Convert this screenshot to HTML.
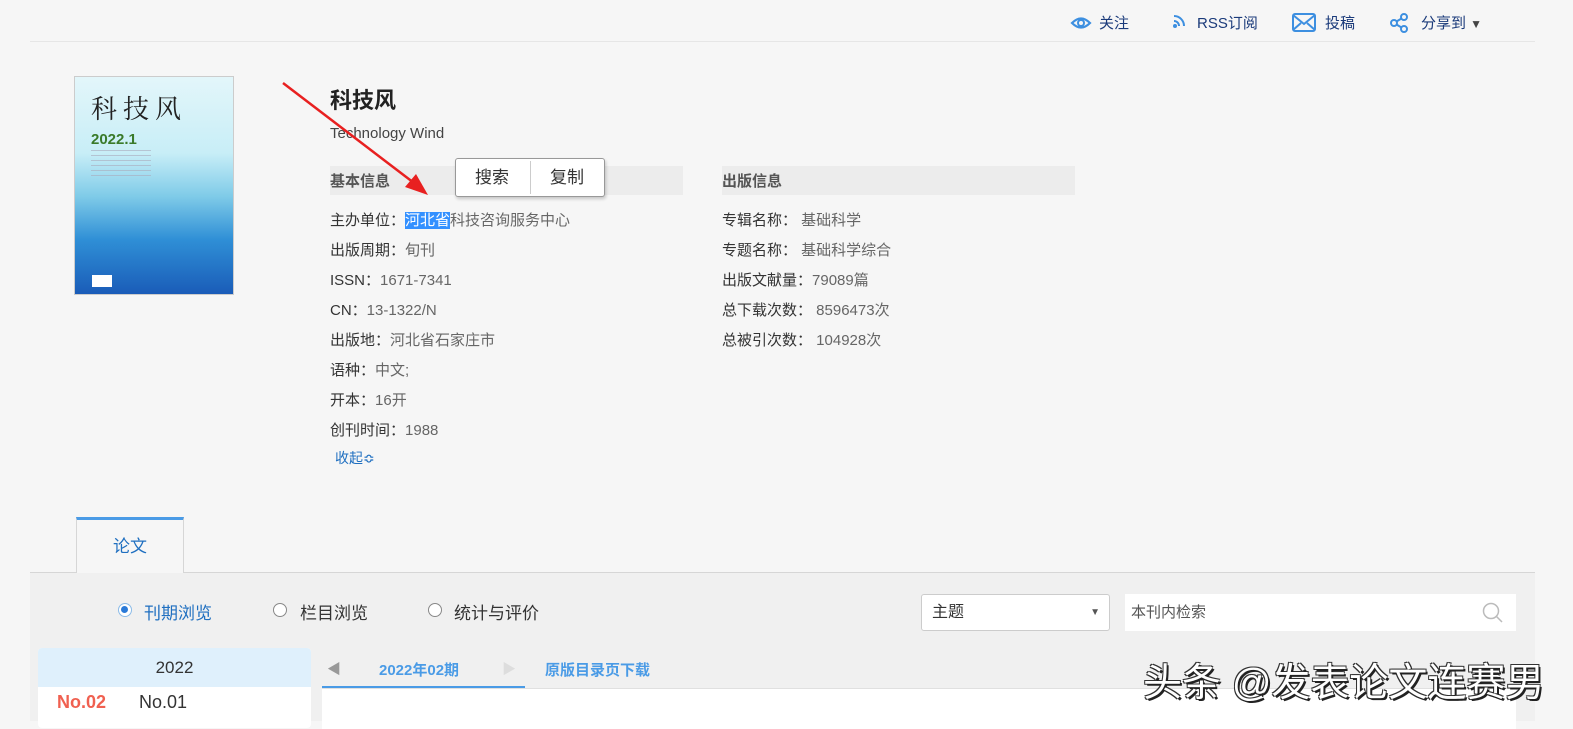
<!DOCTYPE html>
<html><head><meta charset="utf-8"><style>
body{margin:0;width:1573px;height:721px;background:#f6f6f6;font-family:"Liberation Sans","Noto Sans CJK SC",sans-serif;position:relative;overflow:hidden;color:#333}
.a{position:absolute;white-space:nowrap}
.t{font-size:15px;color:#333}
.g{color:#666}
.hdr{position:absolute;height:29px;background:#ececec;font-size:15px;font-weight:bold;color:#555;line-height:31px}
</style></head><body>
<div class="a" style="left:30px;top:41px;width:1505px;height:1px;background:#e6e6e6"></div>
<!-- top nav -->
<svg class="a" style="left:1070px;top:13px" width="22" height="20" viewBox="0 0 22 20"><path d="M2 10Q11 1 20 10Q11 19 2 10Z" fill="none" stroke="#3d8fe0" stroke-width="2.2"/><circle cx="11" cy="10" r="3" fill="none" stroke="#3d8fe0" stroke-width="2"/></svg>
<div class="a t" style="left:1099px;top:12px;color:#1a3a7a">关注</div>
<svg class="a" style="left:1173px;top:12px" width="14" height="16" viewBox="0 0 14 16"><circle cx="2" cy="14" r="2" fill="#3d8fe0"/><path d="M1 9a5 5 0 0 1 5 5M1 4a10 10 0 0 1 10 10" fill="none" stroke="#3d8fe0" stroke-width="2"/></svg>
<div class="a t" style="left:1197px;top:12px;color:#1a3a7a">RSS订阅</div>
<svg class="a" style="left:1292px;top:13px" width="24" height="19" viewBox="0 0 24 19"><rect x="1" y="1" width="22" height="17" rx="2" fill="none" stroke="#3d8fe0" stroke-width="2"/><path d="M1 2L12 11L23 2M1 17l8-7M23 17l-8-7" fill="none" stroke="#3d8fe0" stroke-width="2"/></svg>
<div class="a t" style="left:1325px;top:12px;color:#1a3a7a">投稿</div>
<svg class="a" style="left:1390px;top:13px" width="18" height="20" viewBox="0 0 18 20"><circle cx="4" cy="10" r="3" fill="none" stroke="#3d8fe0" stroke-width="2"/><circle cx="14" cy="4" r="3" fill="none" stroke="#3d8fe0" stroke-width="2"/><circle cx="14" cy="16" r="3" fill="none" stroke="#3d8fe0" stroke-width="2"/><path d="M6.5 8.5l5-3M6.5 11.5l5 3" stroke="#3d8fe0" stroke-width="2"/></svg>
<div class="a t" style="left:1421px;top:12px;color:#1a3a7a">分享到 <span style="font-size:12px;color:#444">▼</span></div>
<!-- cover -->
<div class="a" style="left:74px;top:76px;width:158px;height:217px;border:1px solid #ccc;background:linear-gradient(#e3f6fa 0%,#c8eef7 35%,#7fcbe8 55%,#2f8fd6 75%,#1a5cb8 100%)">
<div class="a" style="left:16px;top:12px;font-family:'Noto Serif CJK SC',serif;font-size:26px;letter-spacing:6px;color:#222">科技风</div>
<div class="a" style="left:16px;top:54px;font-size:15px;font-weight:bold;color:#3a7a2a">2022.1</div>
<div class="a" style="left:16px;top:73px;width:60px;height:30px;background:repeating-linear-gradient(#aab 0 1px,transparent 1px 5px);opacity:.6"></div>
<div class="a" style="left:17px;top:198px;width:20px;height:12px;background:#fff"></div>
</div>
<div class="a" style="left:330px;top:83px;font-size:22px;font-weight:bold;color:#222">科技风</div>
<div class="a t" style="left:330px;top:125px;color:#444">Technology Wind</div>
<div class="hdr" style="left:330px;top:166px;width:353px">基本信息</div>
<div class="hdr" style="left:722px;top:166px;width:353px;padding-left:0">出版信息</div>
<div class="a" style="left:455px;top:158px;width:148px;height:37px;background:#fff;border:1px solid #999;border-radius:3px;box-shadow:1px 2px 3px rgba(0,0,0,.2);font-size:17px;line-height:37px;color:#333">
<span style="position:absolute;left:19px">搜索</span><span style="position:absolute;left:74px;top:2px;width:1px;height:33px;background:#ccc"></span><span style="position:absolute;left:94px">复制</span></div>
<!-- arrow -->
<svg class="a" style="left:280px;top:80px;z-index:5" width="160" height="125"><line x1="3" y1="3" x2="138" y2="106" stroke="#e82020" stroke-width="2.5"/><path d="M148 115L125 107L136 94Z" fill="#e82020"/></svg>
<div class="a t" style="left:330px;top:209px">主办单位：<span style="background:#3390ff;color:#fff">河北省</span><span class="g">科技咨询服务中心</span></div>
<div class="a t" style="left:330px;top:239px">出版周期：<span class="g">旬刊</span></div>
<div class="a t" style="left:330px;top:269px">ISSN：<span class="g">1671-7341</span></div>
<div class="a t" style="left:330px;top:299px">CN：<span class="g">13-1322/N</span></div>
<div class="a t" style="left:330px;top:329px">出版地：<span class="g">河北省石家庄市</span></div>
<div class="a t" style="left:330px;top:359px">语种：<span class="g">中文;</span></div>
<div class="a t" style="left:330px;top:389px">开本：<span class="g">16开</span></div>
<div class="a t" style="left:330px;top:419px">创刊时间：<span class="g">1988</span></div>
<div class="a" style="left:335px;top:448px;font-size:14px;color:#1f6fc0">收起≎</div>
<div class="a t" style="left:722px;top:209px">专辑名称：&nbsp;<span class="g">基础科学</span></div>
<div class="a t" style="left:722px;top:239px">专题名称：&nbsp;<span class="g">基础科学综合</span></div>
<div class="a t" style="left:722px;top:269px">出版文献量：<span class="g">79089篇</span></div>
<div class="a t" style="left:722px;top:299px">总下载次数：&nbsp;<span class="g">8596473次</span></div>
<div class="a t" style="left:722px;top:329px">总被引次数：&nbsp;<span class="g">104928次</span></div>
<!-- tabs -->
<div class="a" style="left:30px;top:573px;width:1505px;height:148px;background:#f0f0f0"></div>
<div class="a" style="left:30px;top:572px;width:1505px;height:1px;background:#d6d6d6"></div>
<div class="a" style="left:76px;top:517px;width:108px;height:56px;background:#f6f6f6;border-left:1px solid #d6d6d6;border-right:1px solid #d6d6d6;border-top:3px solid #4a9be6;box-sizing:border-box;font-size:17px;color:#1f6fc0;text-align:center;line-height:54px">论文</div>
<!-- radios -->
<div class="a" style="left:118px;top:603px;width:14px;height:14px;box-sizing:border-box;border:1.5px solid #8bbbe8;border-radius:50%;background:#fff"><div style="margin:2px;width:7px;height:7px;border-radius:50%;background:#2a7ad8"></div></div>
<div class="a" style="left:144px;top:599px;font-size:17px;color:#1f6fc0">刊期浏览</div>
<div class="a" style="left:273px;top:603px;width:14px;height:14px;box-sizing:border-box;border:1.5px solid #888;border-radius:50%;background:#fff"></div>
<div class="a" style="left:300px;top:599px;font-size:17px;color:#333">栏目浏览</div>
<div class="a" style="left:428px;top:603px;width:14px;height:14px;box-sizing:border-box;border:1.5px solid #888;border-radius:50%;background:#fff"></div>
<div class="a" style="left:454px;top:599px;font-size:17px;color:#333">统计与评价</div>
<div class="a" style="left:921px;top:594px;width:189px;height:37px;box-sizing:border-box;border:1px solid #ccc;border-radius:3px;background:#fff;font-size:16px;line-height:35px;padding-left:10px;color:#333">主题<span style="position:absolute;right:9px;font-size:10px;color:#555">▼</span></div>
<div class="a" style="left:1125px;top:594px;width:391px;height:37px;background:#fff;font-size:15px;line-height:37px;padding-left:6px;box-sizing:border-box;color:#555">本刊内检索
<svg style="position:absolute;right:12px;top:8px" width="22" height="22"><circle cx="9" cy="9" r="7.5" fill="none" stroke="#bbb" stroke-width="1.5"/><line x1="14.5" y1="14.5" x2="20" y2="20" stroke="#bbb" stroke-width="1.5"/></svg></div>
<!-- year list -->
<div class="a" style="left:38px;top:648px;width:273px;height:80px;background:#fff;border-radius:4px"></div>
<div class="a" style="left:38px;top:648px;width:273px;height:39px;background:#dff0fc;border-radius:4px 4px 0 0;text-align:center;line-height:39px;font-size:17px;color:#333">2022</div>
<div class="a" style="left:57px;top:692px;font-size:18px;font-weight:bold;color:#f06050">No.02</div>
<div class="a" style="left:139px;top:692px;font-size:18px;color:#333">No.01</div>
<!-- issue panel -->
<div class="a" style="left:322px;top:688px;width:1194px;height:40px;background:#fff;border-top:1px solid #e0e0e0"></div>
<div class="a" style="left:322px;top:686px;width:203px;height:2px;background:#4a9be6"></div>
<div class="a" style="left:327px;top:659px;font-size:14px;color:#999">◀</div>
<div class="a" style="left:379px;top:659px;font-size:15px;font-weight:bold;color:#4a9be6">2022年02期</div>
<div class="a" style="left:502px;top:659px;font-size:14px;color:#ddd">▶</div>
<div class="a" style="left:545px;top:659px;font-size:15px;font-weight:bold;color:#4a9be6">原版目录页下载</div>
<div class="a" style="left:1143px;top:652px;font-size:39px;color:#fff;text-shadow:2px 2px 0 #222,-1px -1px 0 #333,1px -1px 0 #333,-1px 1px 0 #333">头条 @发表论文连赛男</div>
</body></html>
